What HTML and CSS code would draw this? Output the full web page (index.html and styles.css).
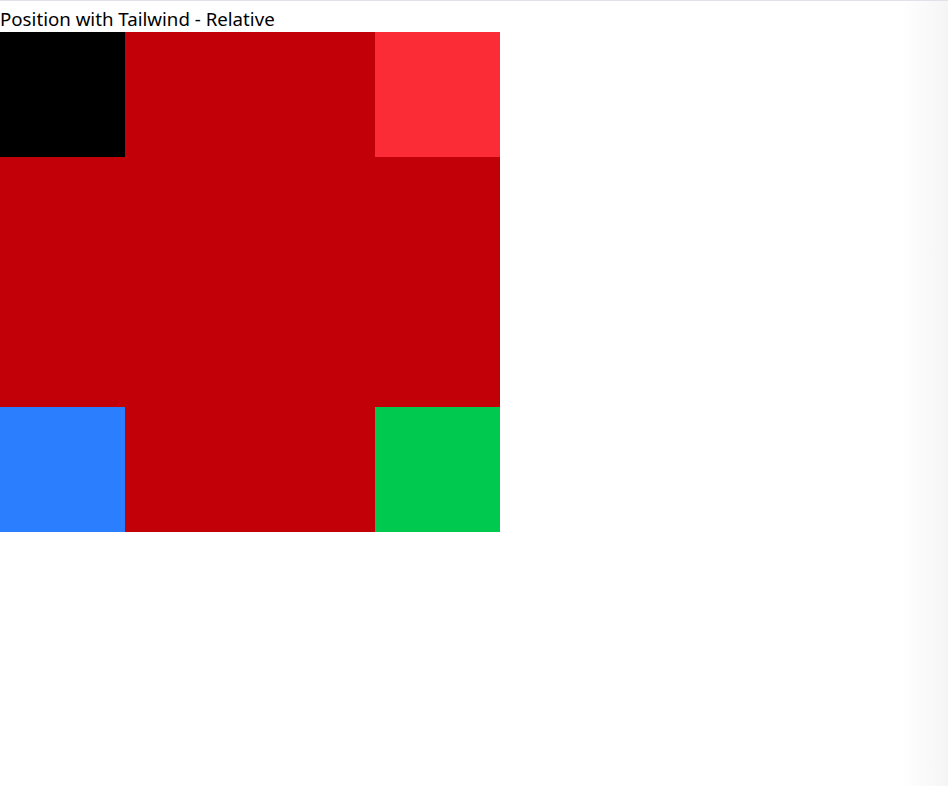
FILE: index.html
```html
<!DOCTYPE html>
<html lang="en">
<head>
<meta charset="utf-8">
<title>Position with Tailwind - Relative</title>
<link rel="stylesheet" href="styles.css">
</head>
<body>
<div class="page">
  <h1 class="title">Position with Tailwind - Relative</h1>
  <div class="board">
    <div class="corner corner-tl"></div>
    <div class="corner corner-tr"></div>
    <div class="corner corner-bl"></div>
    <div class="corner corner-br"></div>
  </div>
</div>
</body>
</html>
```
FILE: styles.css
```css
html {
  background: linear-gradient(to right, #ffffff 0, #ffffff 95%, #f5f5f5 100%);
  min-height: 100%;
}
body {
  margin: 0;
  font-family: "Noto Sans", "Open Sans", sans-serif;
  color: #000;
}
.page {
  border-top: 1px solid #e2e1e8;
}
.title {
  margin: 0;
  padding-top: 4px;
  font-size: 18.7px;
  font-weight: 400;
  line-height: 27px;
  height: 27px;
  white-space: nowrap;
}
.board {
  position: relative;
  width: 500px;
  height: 500px;
  background: #c10007;
}
.corner {
  position: absolute;
  width: 125px;
  height: 125px;
}
.corner-tl { top: 0; left: 0; background: #000000; }
.corner-tr { top: 0; right: 0; background: #fb2c36; }
.corner-bl { bottom: 0; left: 0; background: #2b7fff; }
.corner-br { bottom: 0; right: 0; background: #00c950; }
```
